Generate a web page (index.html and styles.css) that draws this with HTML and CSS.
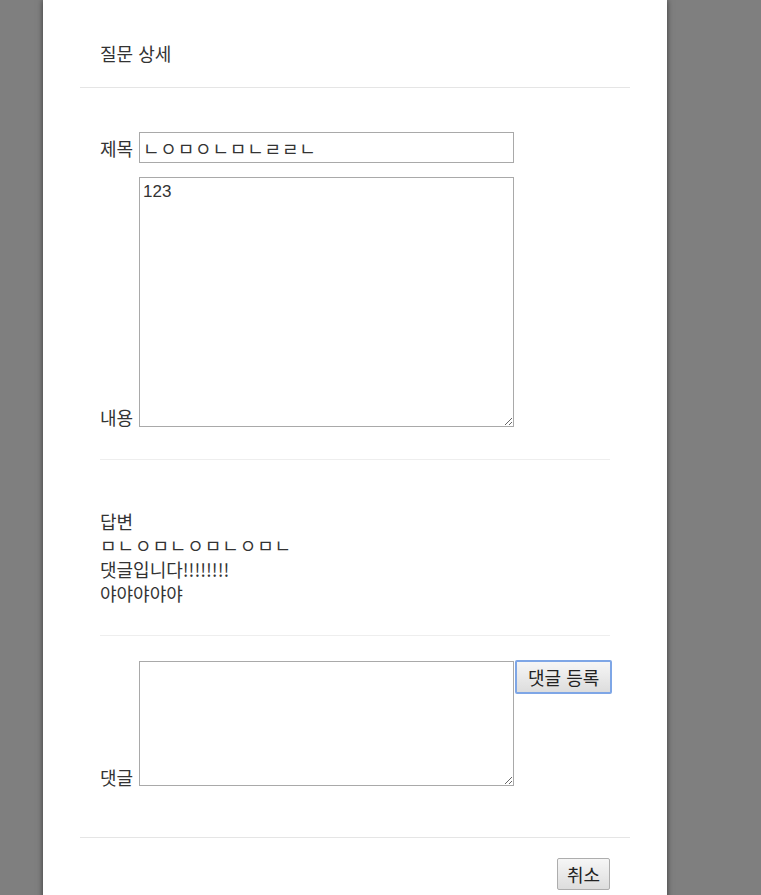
FILE: index.html
```html
<!DOCTYPE html>
<html lang="ko">
<head>
<meta charset="utf-8">
<title>질문 상세</title>
<link rel="stylesheet" href="styles.css">
</head>
<body>
<div class="backdrop">
  <div class="modal">
    <div class="modal-inner">
      <div class="modal-header">
        <h4 class="modal-title">질문 상세</h4>
      </div>
      <div class="modal-body">
        <div class="row row-baseline">
          <label class="label">제목</label>
          <input class="field input" type="text" value="ㄴㅇㅁㅇㄴㅁㄴㄹㄹㄴ">
        </div>
        <div class="row row-bottom">
          <label class="label">내용</label>
          <textarea class="field textarea-content">123</textarea>
        </div>
        <hr class="divider">
        <div class="answers">
          <div class="line">답변</div>
          <div class="line jamo">ㅁㄴㅇㅁㄴㅇㅁㄴㅇㅁㄴ</div>
          <div class="line">댓글입니다!!!!!!!!</div>
          <div class="line">야야야야야</div>
        </div>
        <hr class="divider divider-2">
        <div class="row row-bottom comment-row">
          <label class="label">댓글</label>
          <textarea class="field textarea-comment"></textarea>
          <button class="btn btn-focus" type="button">댓글 등록</button>
        </div>
      </div>
      <div class="modal-footer">
        <button class="btn" type="button">취소</button>
      </div>
    </div>
  </div>
</div>
</body>
</html>
```
FILE: styles.css
```css
html, body {
  margin: 0;
  padding: 0;
  height: 100%;
  overflow: hidden;
}
body {
  background: #7f7f7f;
  font-family: "Noto Sans CJK KR", "Noto Sans", sans-serif;
  font-size: 18px;
  color: #333;
}
.backdrop {
  height: 100%;
  padding-left: 43px;
}
.modal {
  width: 624px;
  min-height: 100%;
  background: #fff;
  box-shadow: 0 0 6px rgba(0, 0, 0, 0.55);
}
.modal-inner {
  margin: 0 37px;
}
.modal-header {
  padding: 41px 20px 22px;
  border-bottom: 1px solid #e5e5e5;
}
.modal-title {
  margin: 0;
  font-size: 18px;
  font-weight: normal;
  line-height: 24px;
}
.modal-body {
  padding: 44px 20px 51px;
}
.row {
  display: flex;
}
.row-baseline {
  align-items: baseline;
  margin-bottom: 14px;
}
.row-bottom {
  align-items: flex-end;
}
.label {
  width: 39px;
  flex: none;
  line-height: 20px;
  white-space: nowrap;
}
.field {
  flex: none;
  box-sizing: border-box;
  width: 375px;
  border: 1px solid #a9a9a9;
  margin: 0;
  font-family: "Noto Sans CJK KR", "Liberation Sans", sans-serif;
  color: #333;
  background: #fff;
}
.input {
  height: 31px;
  padding: 1px 3px;
  font-size: 18px;
  letter-spacing: 0.8px;
}
.textarea-content {
  height: 250px;
  padding: 1px 3px;
  font-family: "Liberation Sans", "Noto Sans CJK KR", sans-serif;
  font-size: 17px;
  line-height: 26px;
  resize: vertical;
}
.textarea-comment {
  height: 125px;
  margin-top: 1px;
  resize: vertical;
}
.divider {
  border: 0;
  border-top: 1px solid #eee;
  margin: 32px 0 49px;
}
.divider-2 {
  margin: 30px 0 24px;
}
.answers .line {
  line-height: 24px;
}
.answers .jamo {
  letter-spacing: 0.9px;
}
.comment-row .label {
  line-height: 18px;
}
.btn {
  flex: none;
  white-space: nowrap;
  font-family: "Noto Sans CJK KR", sans-serif;
  font-size: 18px;
  color: #222;
  background: linear-gradient(#f6f6f6, #dddddd);
  border: 1px solid #adadad;
  border-radius: 2px;
  padding: 0 9px;
  height: 32px;
  line-height: 28px;
  margin: 0;
}
.btn-focus {
  align-self: flex-start;
  margin-left: 1px;
  height: 34px;
  padding: 0 11px;
  border: 2px solid #7ea6e6;
}
.modal-footer {
  border-top: 1px solid #e5e5e5;
  padding: 20px;
  display: flex;
  justify-content: flex-end;
}
```
